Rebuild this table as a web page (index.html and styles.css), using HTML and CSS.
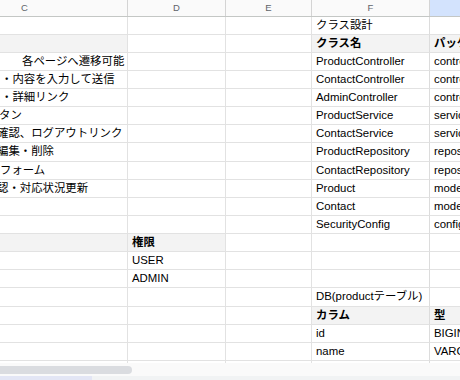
FILE: index.html
```html
<!DOCTYPE html>
<html lang="ja">
<head>
<meta charset="utf-8">
<link rel="stylesheet" href="styles.css">
</head>
<body>
<div class="sheet">
  <div class="hdr">
    <div class="h hC">C</div>
    <div class="h hD">D</div>
    <div class="h hE">E</div>
    <div class="h hF">F</div>
    <div class="h hG sel"></div>
  </div>
  <div class="grid">
    <div class="row"><div class="c cC"></div><div class="c cD"></div><div class="c cE"></div><div class="c cF">クラス設計</div><div class="c cG"></div></div>
    <div class="row"><div class="c cC gr"></div><div class="c cD"></div><div class="c cE"></div><div class="c cF gr b">クラス名</div><div class="c cG gr b">パッケージ</div></div>
    <div class="row"><div class="c cC i22">各ページへ遷移可能</div><div class="c cD"></div><div class="c cE"></div><div class="c cF">ProductController</div><div class="c cG">controller</div></div>
    <div class="row"><div class="c cC i1">・内容を入力して送信</div><div class="c cD"></div><div class="c cE"></div><div class="c cF">ContactController</div><div class="c cG">controller</div></div>
    <div class="row"><div class="c cC i1">・詳細リンク</div><div class="c cD"></div><div class="c cE"></div><div class="c cF">AdminController</div><div class="c cG">controller</div></div>
    <div class="row"><div class="c cC im1">タン</div><div class="c cD"></div><div class="c cE"></div><div class="c cF">ProductService</div><div class="c cG">service</div></div>
    <div class="row"><div class="c cC im3">確認、ログアウトリンク</div><div class="c cD"></div><div class="c cE"></div><div class="c cF">ContactService</div><div class="c cG">service</div></div>
    <div class="row tall"><div class="c cC im3">編集・削除</div><div class="c cD"></div><div class="c cE"></div><div class="c cF">ProductRepository</div><div class="c cG">repository</div></div>
    <div class="row"><div class="c cC i0">フォーム</div><div class="c cD"></div><div class="c cE"></div><div class="c cF">ContactRepository</div><div class="c cG">repository</div></div>
    <div class="row"><div class="c cC im3">認・対応状況更新</div><div class="c cD"></div><div class="c cE"></div><div class="c cF">Product</div><div class="c cG">model</div></div>
    <div class="row"><div class="c cC"></div><div class="c cD"></div><div class="c cE"></div><div class="c cF">Contact</div><div class="c cG">model</div></div>
    <div class="row"><div class="c cC"></div><div class="c cD"></div><div class="c cE"></div><div class="c cF">SecurityConfig</div><div class="c cG">config</div></div>
    <div class="row"><div class="c cC gr"></div><div class="c cD gr b">権限</div><div class="c cE"></div><div class="c cF"></div><div class="c cG"></div></div>
    <div class="row"><div class="c cC"></div><div class="c cD">USER</div><div class="c cE"></div><div class="c cF"></div><div class="c cG"></div></div>
    <div class="row"><div class="c cC"></div><div class="c cD">ADMIN</div><div class="c cE"></div><div class="c cF"></div><div class="c cG"></div></div>
    <div class="row tall"><div class="c cC"></div><div class="c cD"></div><div class="c cE"></div><div class="c cF">DB(productテーブル)</div><div class="c cG"></div></div>
    <div class="row"><div class="c cC"></div><div class="c cD"></div><div class="c cE"></div><div class="c cF gr b">カラム</div><div class="c cG gr b">型</div></div>
    <div class="row"><div class="c cC"></div><div class="c cD"></div><div class="c cE"></div><div class="c cF">id</div><div class="c cG">BIGINT</div></div>
    <div class="row"><div class="c cC"></div><div class="c cD"></div><div class="c cE"></div><div class="c cF">name</div><div class="c cG">VARCHAR</div></div>
    <div class="row"><div class="c cC"></div><div class="c cD"></div><div class="c cE"></div><div class="c cF">price</div><div class="c cG">価格</div></div>
  </div>
</div>
<div class="scroll">
  <div class="thumb"></div>
</div>
<div class="tabs">
  <div class="tab"></div>
</div>
</body>
</html>
```

FILE: styles.css
```css
html, body {
  margin: 0;
  padding: 0;
  background: #fff;
}
body {
  width: 460px;
  height: 380px;
  overflow: hidden;
  font-family: "Liberation Sans", "Noto Sans CJK JP", sans-serif;
}
.sheet {
  height: 363px;
  overflow: hidden;
}
.hdr {
  display: flex;
  height: 17px;
  box-sizing: border-box;
  border-bottom: 1px solid #c4c7c5;
  background: #fafafa;
}
.h {
  flex: none;
  box-sizing: border-box;
  border-right: 1px solid #d4d4d4;
  text-align: center;
  font-size: 9.5px;
  line-height: 16px;
  color: #60646a;
}
.hC { width: 206px; margin-left: -78px; }
.hD { width: 98px; }
.hE { width: 86px; }
.hF { width: 118px; }
.hG { width: 120px; border-right: none; }
.sel { background: #d3e3fd; }

.row {
  display: flex;
  height: 18px;
}
.row.tall { height: 19px; }
.c {
  flex: none;
  box-sizing: border-box;
  border-right: 1px solid #e2e2e2;
  border-bottom: 1px solid #e2e2e2;
  padding: 0 3px 0 4px;
  font-size: 11.4px;
  line-height: 17px;
  color: #000;
  white-space: nowrap;
  overflow: hidden;
}
.cC { width: 128px; padding: 0; }
.cD { width: 98px; }
.cE { width: 86px; }
.cF { width: 118px; border-right-color: #dcdcdc; }
.cG { width: 120px; border-right: none; }
.gr { background: #f3f3f3; }
.b { font-weight: bold; }

.i22 { text-indent: 22px; }
.i1 { text-indent: 1px; }
.i0 { text-indent: 0; }
.im1 { text-indent: -1px; }
.im3 { text-indent: -3px; }

.scroll {
  height: 13px;
  background: #fafafa;
  padding-top: 3px;
  box-sizing: border-box;
}
.thumb {
  width: 132px;
  height: 8px;
  border-radius: 0 4px 4px 0;
  background: #dadce0;
}
.tabs {
  height: 4px;
  background: #f1f3f4;
  display: flex;
}
.tab {
  width: 92px;
  background: #e3e6f5;
}
```
